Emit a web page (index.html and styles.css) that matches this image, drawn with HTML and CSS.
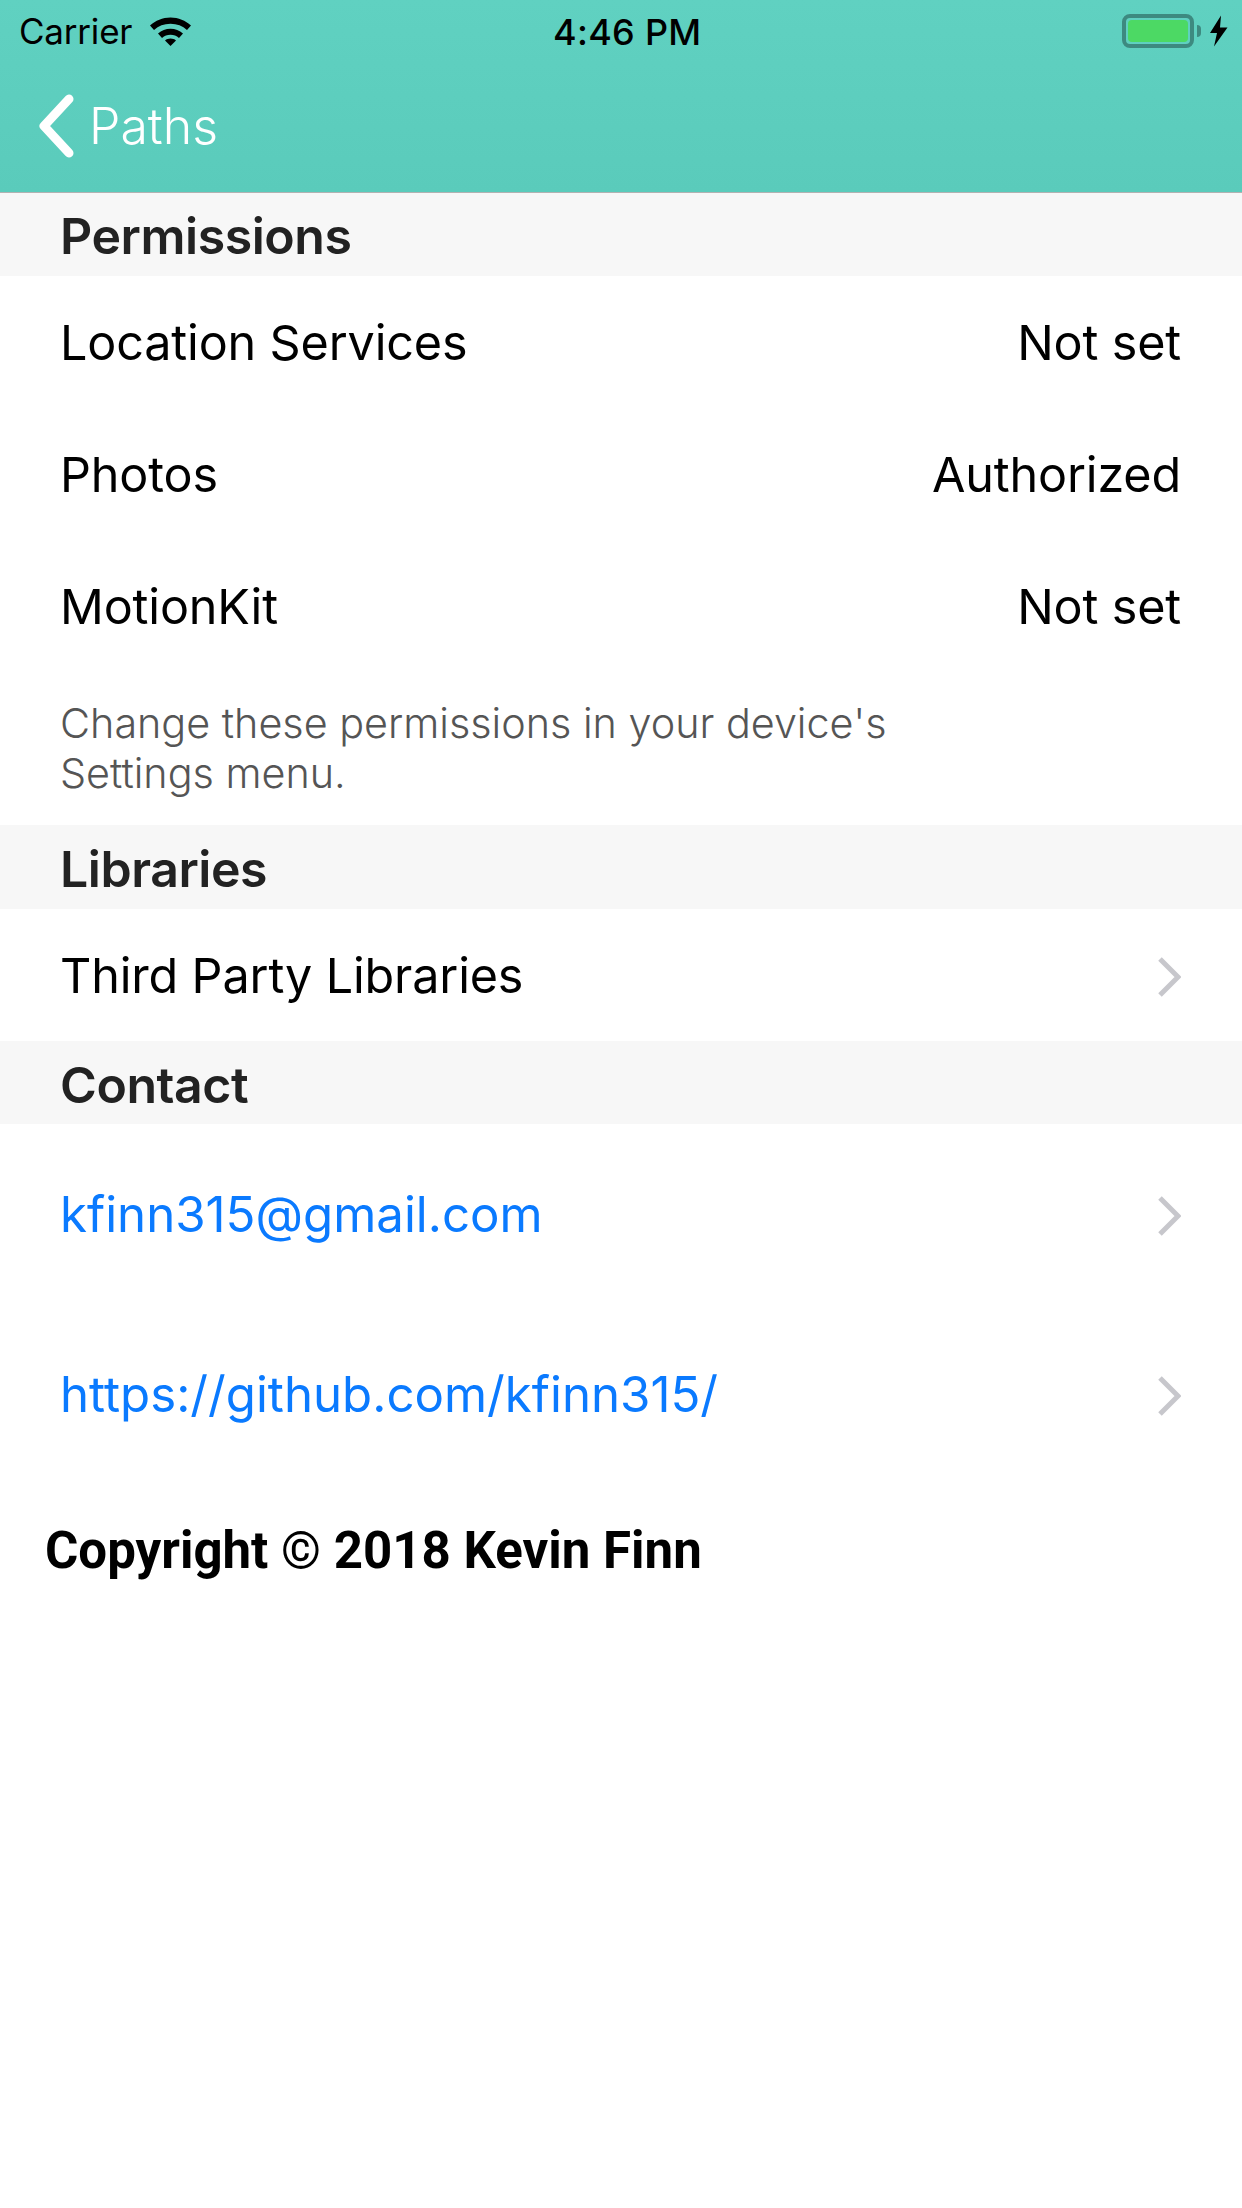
FILE: index.html
```html
<!DOCTYPE html>
<html lang="en">
<head>
<meta charset="utf-8">
<title>Settings</title>
<link rel="stylesheet" href="styles.css">
</head>
<body>
<header class="top">
  <div class="status">
    <div class="status-left">
      <span class="carrier">Carrier</span>
      <svg class="wifi" width="44" height="32" viewBox="0 0 44 32"><path d="M1 10.500C6.500 5.500 13.500 2.500 21.500 2.500S36.500 5.500 42 10.500L38 15C33.500 11 28 8.800 21.500 8.800S9.500 11 5 15Z"/><path d="M9 18.500C12.500 15.500 16.800 13.700 21.500 13.700S30.500 15.500 34 18.500L30 23C27.500 20.800 24.800 19.800 21.500 19.800S15.500 20.800 13 23Z"/><path d="M16 25.500C17.500 24.300 19.500 23.600 21.500 23.600S25.500 24.300 27 25.500L21.500 31Z"/></svg>
    </div>
    <span class="clock">4:46 PM</span>
    <div class="status-right">
      <div class="battery"><div class="battery-fill"></div></div>
      <div class="battery-cap"></div>
      <svg class="bolt" width="18" height="32" viewBox="0 0 18 32"><path d="M11 0.500L0 18H7L4 31.500L17.500 12.500H10Z"/></svg>
    </div>
  </div>
  <div class="nav">
    <svg class="back" width="40" height="64" viewBox="0 0 40 64"><path d="M33 5L8 32L33 59" /></svg>
    <span class="nav-title">Paths</span>
  </div>
</header>
<main>
  <h2 class="section first">Permissions</h2>
  <div class="row"><span>Location Services</span><span>Not set</span></div>
  <div class="row"><span>Photos</span><span>Authorized</span></div>
  <div class="row"><span>MotionKit</span><span>Not set</span></div>
  <p class="note">Change these permissions in your device's<br>Settings menu.</p>
  <h2 class="section libraries">Libraries</h2>
  <div class="row"><span>Third Party Libraries</span><svg class="chev low" width="24" height="40" viewBox="0 0 24 40"><path d="M3 2L21 20L3 38"/></svg></div>
  <h2 class="section contact">Contact</h2>
  <div class="row tall link"><span>kfinn315@gmail.com</span><svg class="chev low" width="24" height="40" viewBox="0 0 24 40"><path d="M3 2L21 20L3 38"/></svg></div>
  <div class="row tall link"><span>https://github.com/kfinn315/</span><svg class="chev low" width="24" height="40" viewBox="0 0 24 40"><path d="M3 2L21 20L3 38"/></svg></div>
  <p class="copyright">Copyright © 2018 Kevin Finn</p>
</main>
</body>
</html>
```
FILE: styles.css
```css
* { box-sizing: border-box; }
html, body { margin: 0; padding: 0; }
body { width: 1242px; height: 2208px; background: #fff; font-family: Inter, "Noto Sans", sans-serif; color: #000; overflow: hidden; }
.top { height: 193px; background: linear-gradient(#60d1c1, #5acbbb); border-bottom: 1px solid #b2b2b2; }
.status { height: 60px; display: flex; align-items: center; justify-content: space-between; padding: 1px 14px 0 19px; position: relative; }
.status-left { display: flex; align-items: center; gap: 17px; }
.carrier { font-size: 35px; letter-spacing: -0.2px; }
.wifi { fill: #000; }
.clock { font-size: 36px; font-weight: 500; position: absolute; left: 553px; top: 10px; letter-spacing: 0.3px; }
.status-right { display: flex; align-items: center; }
.battery { width: 72px; height: 34px; border: 4px solid #3d8a80; border-radius: 8px; padding: 2px; }
.battery-fill { width: 100%; height: 100%; background: #4cd964; border-radius: 4px; }
.battery-cap { width: 4px; height: 12px; background: #3d8a80; border-radius: 0 4px 4px 0; margin-left: 3px; }
.bolt { fill: #000; margin-left: 9px; }
.nav { height: 132px; display: flex; align-items: center; padding: 0 0 1px 36px; gap: 13px; }
.back { fill: none; stroke: #fff; stroke-width: 9; stroke-linecap: round; stroke-linejoin: round; }
.nav-title { font-size: 50px; color: #fff; font-weight: 300; }
.section { margin: 0; height: 83px; background: #f7f7f7; padding-left: 60px; font-size: 50px; line-height: 88px; font-weight: 600; color: #222; letter-spacing: -0.45px; }
.section.first { height: 83px; line-height: 86px; }
.section.libraries { height: 84px; }
.section.contact { height: 83px; line-height: 89px; }
.row { height: 132px; display: flex; align-items: center; justify-content: space-between; padding: 0 61px 0 60px; font-size: 48.500px; letter-spacing: -0.15px; color: #000; }
.row.tall { height: 180px; }
.row.link { font-size: 49.200px; letter-spacing: 0; }
.link { color: #0a7aff; }
.chev { fill: none; stroke: #c7c7cc; stroke-width: 5; }
.chev.low { position: relative; top: 2px; }
.note { margin: 0; height: 153px; padding: 26px 60px 0; font-size: 41.300px; line-height: 50px; color: #555; font-weight: 300; }
.copyright { margin: 0; padding: 37px 0 0 45px; font-family: Roboto, sans-serif; font-weight: 700; font-size: 51px; line-height: 60px; color: #000; }
```
